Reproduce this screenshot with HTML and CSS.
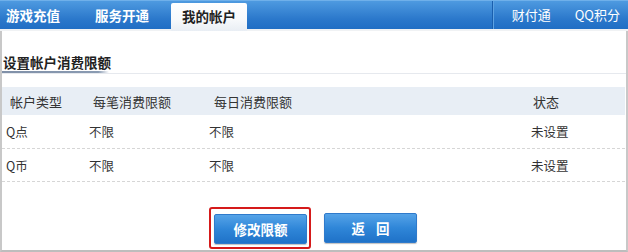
FILE: index.html
```html
<!DOCTYPE html>
<html lang="zh-CN">
<head>
<meta charset="utf-8">
<title>设置帐户消费限额</title>
<link rel="stylesheet" href="styles.css">
</head>
<body>
<div class="page">
  <div class="nav">
    <div class="nav-left">
      <a class="nav-item">游戏充值</a>
      <a class="nav-item">服务开通</a>
      <a class="nav-item active">我的帐户</a>
    </div>
    <div class="nav-right">
      <span class="nav-sep"></span>
      <a class="nav-link">财付通</a>
      <a class="nav-link">QQ积分</a>
    </div>
  </div>
  <div class="panel">
    <div class="title-wrap">
      <h2 class="title">设置帐户消费限额</h2>
    </div>
    <div class="table">
      <div class="row head">
        <span class="c1">帐户类型</span>
        <span class="c2">每笔消费限额</span>
        <span class="c3">每日消费限额</span>
        <span class="c4">状态</span>
      </div>
      <div class="row body">
        <span class="c1">Q点</span>
        <span class="c2">不限</span>
        <span class="c3">不限</span>
        <span class="c4">未设置</span>
      </div>
      <div class="row body">
        <span class="c1">Q币</span>
        <span class="c2">不限</span>
        <span class="c3">不限</span>
        <span class="c4">未设置</span>
      </div>
    </div>
    <div class="actions">
      <span class="focus-ring"><button class="btn">修改限额</button></span>
      <button class="btn btn-spaced">返 回</button>
    </div>
  </div>
</div>
</body>
</html>
```
FILE: styles.css
```css
* { box-sizing: border-box; }
html, body { margin: 0; padding: 0; background: #fff; }
body {
  font-family: "Noto Sans CJK SC", "Liberation Sans", sans-serif;
  font-size: 13px;
  color: #333;
}
.page { width: 628px; height: 252px; display: flex; flex-direction: column; }
.nav {
  height: 31px;
  display: flex;
  justify-content: space-between;
  background: linear-gradient(#f0f2f4, #f0f2f4) bottom / 100% 2px no-repeat,
              linear-gradient(#4e9ae0, #2b78cb 60%, #1e6cc3);
  background-color: #fff;
  border-top: 1px solid #6fb0ea;
}
.nav-left { display: flex; align-items: flex-end; }
.nav-item {
  color: #fff;
  font-weight: bold;
  font-size: 13.5px;
  line-height: 28px;
  height: 30px;
  padding: 0 6px;
  margin-right: 23px;
}
.nav-item:nth-child(2) { margin-right: 16px; }
.nav-item.active {
  color: #222;
  margin-right: 0;
  height: 28px;
  line-height: 26px;
  padding: 0 11px;
  background: linear-gradient(#ffffff, #f7f9fb 60%, #e9eef4);
  border-radius: 2px 2px 0 0;
}
.nav-right { display: flex; align-items: center; height: 28px; }
.nav-sep {
  width: 2px;
  height: 28px;
  border-left: 1px solid #1a5fae;
  border-right: 1px solid #5ea3e3;
  margin-right: 18px;
}
.nav-link {
  color: #fff;
  font-size: 13px;
  line-height: 28px;
  margin-right: 24px;
}
.nav-link:last-child { margin-right: 8px; }
.panel {
  flex: 1;
  border-left: 2px solid #c8c8c8;
  border-right: 2px solid #c8c8c8;
  border-bottom: 2px solid #bdbdbd;
  display: flex;
  flex-direction: column;
}
.title-wrap {
  margin-top: 22px;
  background: linear-gradient(90deg, #8090a8, #8a9bb2 90%, transparent) left bottom / 107px 2px no-repeat;
  border-bottom: 1px solid #e6e9ee;
  padding-bottom: 2px;
}
.title {
  margin: 0;
  padding-left: 1px;
  font-size: 13.5px;
  font-weight: bold;
  color: #222;
  line-height: 18px;
}
.table { margin-top: 13px; padding: 0 1px 0 0; }
.row { display: flex; align-items: center; }
.row.head { height: 28px; background: #e8eef5; color: #333; }
.row.body { height: 33px; border-bottom: 1px dashed #d6d6d6; color: #333; font-size: 12.5px; }
.row.head + .row.body { height: 34px; }
.c1 { width: 83px; padding-left: 8px; }
.c2 { width: 120px; }
.c3 { width: 322px; }
.c4 { flex: 1; }
.row.body .c1 { padding-left: 4px; width: 87px; }
.row.head .c2 { padding-left: 8px; }
.row.head .c3 { padding-left: 9px; }
.row.head .c4 { padding-left: 6px; }
.actions {
  display: flex;
  justify-content: center;
  align-items: center;
  gap: 13px;
  margin-top: 25px;
  padding-right: 2px;
}
.focus-ring {
  display: inline-flex;
  border: 2px solid #d51a1a;
  border-radius: 3px;
  padding: 5px 2px 3px 3px;
}
.btn {
  width: 93px;
  height: 30px;
  border: 1px solid #2f7acb;
  border-radius: 2px;
  background: linear-gradient(#55a3e8, #2f86d8 50%, #1f72c8);
  color: #fff;
  font-family: "Noto Sans CJK SC", sans-serif;
  font-weight: bold;
  font-size: 13.5px;
  padding: 0;
  box-shadow: 0 1px 1px rgba(0,0,0,0.25);
}
.btn-spaced { word-spacing: 8px; }
```
